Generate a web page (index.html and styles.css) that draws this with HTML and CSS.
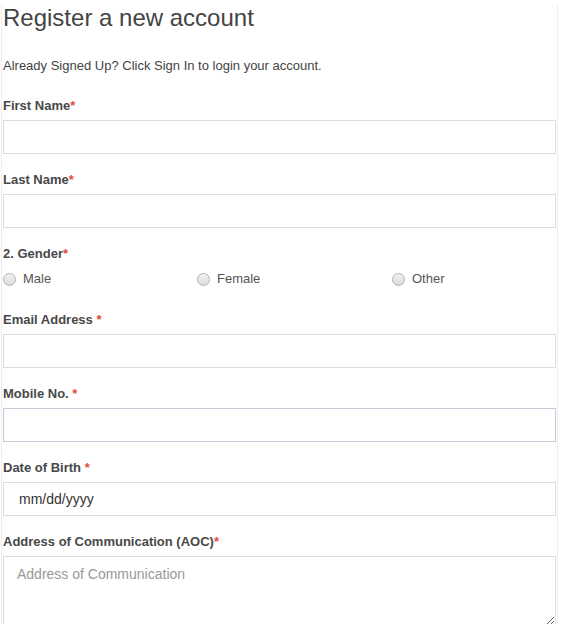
FILE: index.html
```html
<!DOCTYPE html>
<html lang="en">
<head>
<meta charset="utf-8">
<title>Register a new account</title>
<link rel="stylesheet" href="styles.css">
</head>
<body>
<div class="page">
  <h1 class="title">Register a new account</h1>
  <p class="intro">Already Signed Up? Click Sign In to login your account.</p>
  <form class="form">
    <div class="group">
      <label class="label">First Name<span class="req">*</span></label>
      <input class="field" type="text">
    </div>
    <div class="group">
      <label class="label">Last Name<span class="req">*</span></label>
      <input class="field" type="text">
    </div>
    <div class="group group-radio">
      <label class="label">2. Gender<span class="req">*</span></label>
      <div class="radios">
        <label class="radio"><input type="radio" name="g" class="dot"><span>Male</span></label>
        <label class="radio"><input type="radio" name="g" class="dot"><span>Female</span></label>
        <label class="radio"><input type="radio" name="g" class="dot"><span>Other</span></label>
      </div>
    </div>
    <div class="group">
      <label class="label">Email Address <span class="req">*</span></label>
      <input class="field" type="text">
    </div>
    <div class="group">
      <label class="label">Mobile No. <span class="req">*</span></label>
      <input class="field field-blue" type="text">
    </div>
    <div class="group">
      <label class="label">Date of Birth <span class="req">*</span></label>
      <input class="field field-date" type="text" placeholder="mm/dd/yyyy">
    </div>
    <div class="group">
      <label class="label">Address of Communication (AOC)<span class="req">*</span></label>
      <textarea class="area" placeholder="Address of Communication"></textarea>
    </div>
  </form>
</div>
</body>
</html>
```

FILE: styles.css
```css
html, body {
  margin: 0;
  padding: 0;
  background: #fff;
}
body {
  font-family: "Liberation Sans", Arial, sans-serif;
  color: #444;
}
.page {
  margin-left: 1px;
  width: 557px;
  box-sizing: border-box;
  min-height: 624px;
  border-left: 1px solid #eeeeee;
  border-right: 1px solid #eeeeee;
  padding: 0 1px;
}
.title {
  margin: 5px 0 0;
  font-size: 24px;
  line-height: 26px;
  font-weight: normal;
  color: #444;
}
.intro {
  margin: 26px 0 0;
  font-size: 13px;
  line-height: 18px;
  color: #444;
}
.form {
  margin-top: 21px;
}
.group {
  display: flex;
  flex-direction: column;
  margin-bottom: 16px;
}
.group-radio {
  margin-bottom: 21px;
}
.label {
  font-size: 13px;
  line-height: 18px;
  font-weight: bold;
  color: #484848;
  padding-top: 1px;
  margin-bottom: 5px;
}
.req {
  color: #e8473b;
}
.field {
  display: block;
  box-sizing: border-box;
  width: 100%;
  height: 34px;
  margin: 0;
  border: 1px solid #dddddd;
  border-radius: 0;
  padding: 6px 12px;
  font-family: "Liberation Sans", Arial, sans-serif;
  font-size: 14px;
  color: #333;
  background: #fff;
  outline: none;
}
.field-blue {
  border-color: #c3cbd8;
}
.field-date {
  padding-left: 15px;
}
.field-date::placeholder {
  color: #333;
  opacity: 1;
}
.area {
  display: block;
  box-sizing: border-box;
  width: 100%;
  height: 70px;
  margin: 0;
  border: 1px solid #dddddd;
  border-radius: 0;
  padding: 7px 13px;
  font-family: "Liberation Sans", Arial, sans-serif;
  font-size: 14px;
  line-height: 20px;
  color: #333;
  outline: none;
}
.area::placeholder {
  color: #999;
  opacity: 1;
}
.radios {
  display: grid;
  grid-template-columns: 194px 195px 1fr;
  height: 20px;
  margin-top: 1px;
}
.radio {
  display: flex;
  align-items: center;
  font-size: 13px;
  line-height: 20px;
  color: #555;
}
.dot {
  appearance: none;
  -webkit-appearance: none;
  width: 13px;
  height: 13px;
  margin: 0 7px 0 0;
  border: 1px solid #b0b0b0;
  border-radius: 50%;
  background: linear-gradient(#f2f2f2, #dcdcdc);
  box-sizing: border-box;
  flex: none;
}
```
